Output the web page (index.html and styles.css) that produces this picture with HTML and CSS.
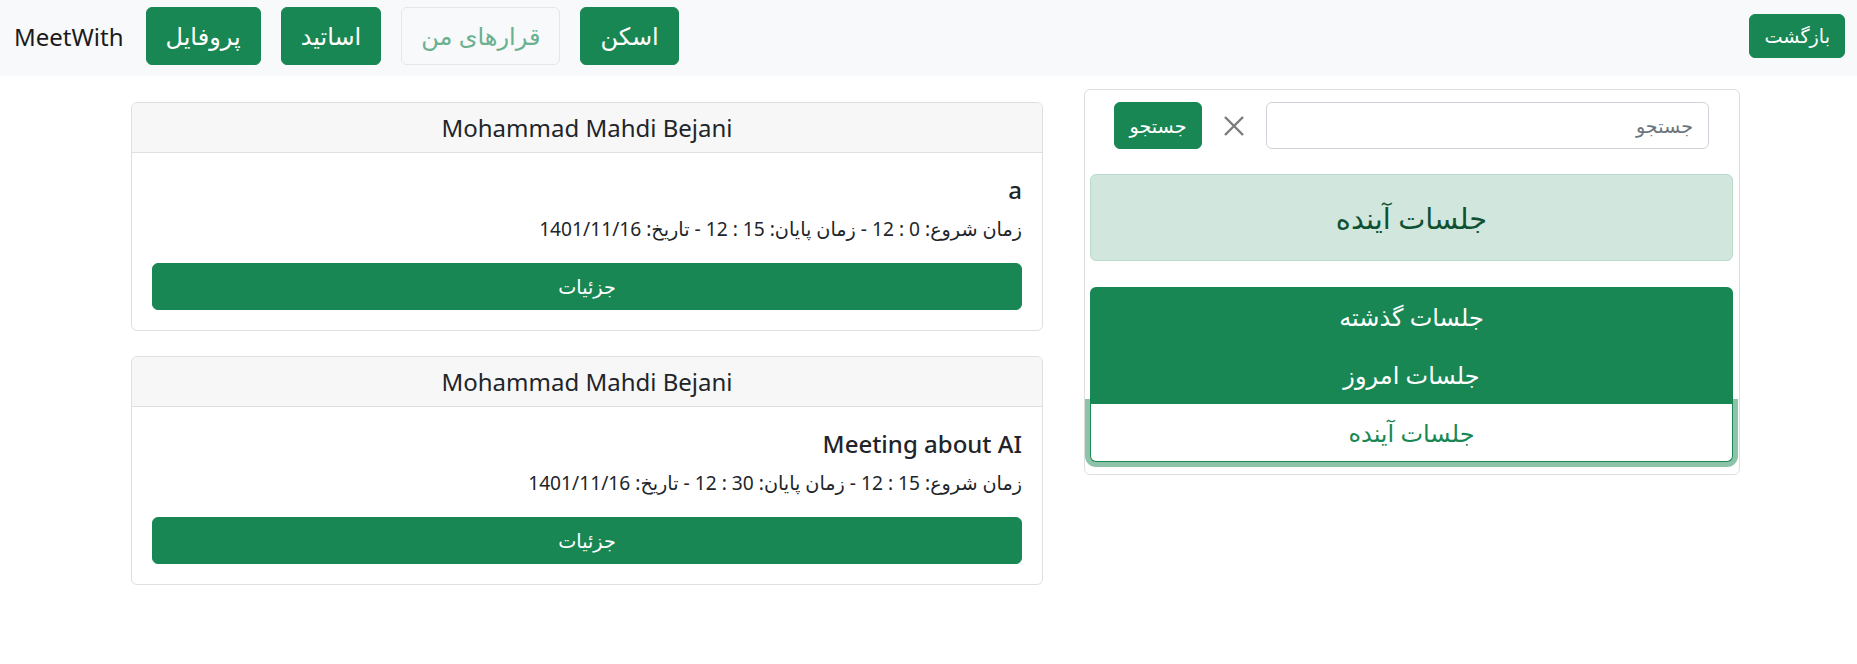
FILE: index.html
```html
<!DOCTYPE html>
<html lang="fa">
<head>
<meta charset="utf-8">
<title>MeetWith</title>
<link rel="stylesheet" href="styles.css">
</head>
<body>
<nav class="navbar">
  <div class="nav-main">
    <span class="brand">MeetWith</span>
    <button class="btn btn-lg btn-green">پروفایل</button>
    <button class="btn btn-lg btn-green">اساتید</button>
    <button class="btn btn-lg btn-disabled">قرارهای من</button>
    <button class="btn btn-lg btn-green">اسکن</button>
  </div>
  <button class="btn btn-green btn-back">بازگشت</button>
</nav>

<main class="content" dir="rtl">
  <aside class="panel">
    <div class="search-row">
      <input class="search-input" type="text" placeholder="جستجو">
      <span class="close-icon">
        <svg width="22" height="22" viewBox="0 0 22 22"><path d="M2 2 L20 20 M20 2 L2 20" stroke="#7b7b7b" stroke-width="2.4" stroke-linecap="butt"/></svg>
      </span>
      <button class="btn btn-green btn-search">جستجو</button>
    </div>
    <div class="alert">جلسات آینده</div>
    <div class="list-group">
      <div class="list-item active">جلسات گذشته</div>
      <div class="list-item active">جلسات امروز</div>
      <div class="list-item current">جلسات آینده</div>
    </div>
  </aside>

  <section class="cards">
    <article class="card">
      <header class="card-header">Mohammad Mahdi Bejani</header>
      <div class="card-body">
        <h5 class="card-title">a</h5>
        <p class="card-text">زمان شروع: 0 : 12 - زمان پایان: 15 : 12 - تاریخ: 1401/11/16</p>
        <button class="btn btn-green btn-block">جزئیات</button>
      </div>
    </article>
    <article class="card">
      <header class="card-header">Mohammad Mahdi Bejani</header>
      <div class="card-body">
        <h5 class="card-title">Meeting about AI</h5>
        <p class="card-text">زمان شروع: 15 : 12 - زمان پایان: 30 : 12 - تاریخ: 1401/11/16</p>
        <button class="btn btn-green btn-block">جزئیات</button>
      </div>
    </article>
  </section>
</main>
</body>
</html>
```
FILE: styles.css
```css
* { box-sizing: border-box; }
html, body { margin: 0; padding: 0; }
body {
  font-family: "Noto Sans", "DejaVu Sans", sans-serif;
  font-size: 19.2px;
  color: #212529;
  background: #fff;
}

.navbar {
  height: 76px;
  background: #f8f9fa;
  display: flex;
  align-items: center;
  justify-content: space-between;
  padding: 7px 12px 11px 14px;
}
.nav-main {
  display: flex;
  align-items: center;
  gap: 20px;
}
.brand {
  font-size: 24px;
  color: #1b1b1b;
  margin-right: 2px;
}

.btn {
  font-family: inherit;
  border: 1px solid transparent;
  border-radius: 6px;
  font-size: 19.2px;
  line-height: 1;
  display: inline-flex;
  align-items: center;
  justify-content: center;
  cursor: pointer;
}
.btn-lg {
  font-size: 24px;
  height: 58px;
  padding: 0 19px;
}
.btn-green {
  background: #198754;
  border-color: #198754;
  color: #fff;
}
.btn-disabled {
  background: #f8f9fa;
  border-color: #e4e7ea;
  color: #6bb08f;
}
.btn-back {
  height: 44px;
  padding: 0 14px;
}

.content {
  display: flex;
  align-items: flex-start;
  gap: 41px;
  padding: 13px 117px 40px 131px;
}

.panel {
  width: 656px;
  flex: none;
  border: 1px solid #dedede;
  border-radius: 6px;
  padding: 12px 6px 12px 5px;
}
.search-row {
  display: flex;
  align-items: center;
  padding: 0 24px;
  gap: 21px;
}
.search-input {
  flex: 1;
  min-width: 0;
  height: 47px;
  border: 1px solid #ced4da;
  border-radius: 6px;
  padding: 0 15px;
  font-family: inherit;
  font-size: 19.2px;
  color: #212529;
  background: #fff;
}
.search-input::placeholder { color: #6c757d; }
.close-icon {
  display: flex;
  width: 22px;
  height: 22px;
}
.btn-search {
  width: 88px;
  height: 47px;
  padding: 0;
}

.alert {
  margin-top: 25px;
  height: 87px;
  display: flex;
  align-items: center;
  justify-content: center;
  background: #d1e7dd;
  border: 1px solid #badbcc;
  border-radius: 6px;
  color: #0f5132;
  font-size: 28.8px;
}

.list-group {
  margin-top: 26px;
  display: flex;
  flex-direction: column;
}
.list-item {
  height: 58.4px;
  display: flex;
  align-items: center;
  justify-content: center;
  font-size: 24px;
}
.list-item.active {
  background: #198754;
  color: #fff;
}
.list-item.active:first-child {
  border-radius: 6px 6px 0 0;
}
.list-item.current {
  background: #fff;
  color: #198754;
  border: 1px solid #198754;
  border-top: none;
  border-radius: 0 0 6px 6px;
  box-shadow: 0 0 0 5px rgba(25, 135, 84, 0.5);
  position: relative;
  z-index: 0;
}
.list-group .list-item.active:nth-child(2) {
  position: relative;
  z-index: 1;
}

.cards {
  flex: 1;
  margin-top: 13px;
  display: flex;
  flex-direction: column;
  gap: 25px;
}
.card {
  border: 1px solid #dfdfdf;
  border-radius: 6px;
  overflow: hidden;
}
.card-header {
  height: 50px;
  background: #f7f7f7;
  border-bottom: 1px solid #dfdfdf;
  display: flex;
  align-items: center;
  justify-content: center;
  font-size: 24px;
  font-weight: 400;
  direction: ltr;
}
.card-body {
  padding: 20px 20px 20px;
}
.card-title {
  margin: 0;
  font-size: 24px;
  font-weight: 500;
  line-height: 34px;
  text-align: right;
}
.card-text {
  margin: 5px 0 17px;
  line-height: 34px;
  text-align: right;
}
.btn-block {
  width: 100%;
  height: 47px;
}
```
